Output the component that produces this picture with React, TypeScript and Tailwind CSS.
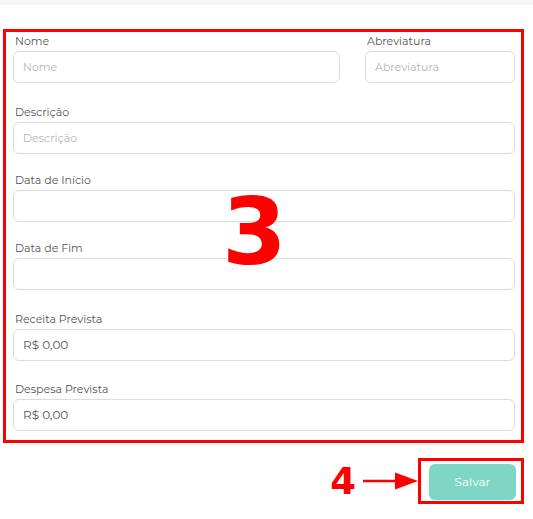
import React from "react";

const font = { fontFamily: '"Montserrat", "Inter", "Liberation Sans", sans-serif' };

function Field({
  label,
  placeholder,
  value,
  className,
}: {
  label: string;
  placeholder?: string;
  value?: string;
  className?: string;
}) {
  return (
    <div className={className}>
      <div className="h-[14px] pl-[2px] text-[11px] leading-[14px] text-[#555]">{label}</div>
      <div className="mt-[3px] flex h-[32px] items-center rounded-[6px] border border-[#dcdcdc] bg-white px-[9px]">
        {value ? (
          <span className="text-[12px] text-[#555]">{value}</span>
        ) : (
          <span className="text-[11px] text-[#b5b5b5]">{placeholder}</span>
        )}
      </div>
    </div>
  );
}

export default function App() {
  return (
    <div className="h-[519px] w-[533px] bg-white" style={font}>
      <div className="h-[5px] bg-[#f6f6f6]" />
      <div className="relative ml-[3px] mt-[24px] w-[521px] border-[3px] border-[#ff0000] pb-[9px] pl-[7px] pr-[6px] pt-[2px]">
        <div className="flex gap-[25px]">
          <Field label="Nome" placeholder="Nome" className="w-[327px]" />
          <Field label="Abreviatura" placeholder="Abreviatura" className="flex-1" />
        </div>
        <Field label="Descrição" placeholder="Descrição" className="mt-[22px]" />
        <Field label="Data de Início" className="mt-[19px]" />
        <Field label="Data de Fim" className="mt-[19px]" />
        <Field label="Receita Prevista" value="R$ 0,00" className="mt-[22px]" />
        <Field label="Despesa Prevista" value="R$ 0,00" className="mt-[21px]" />
        <div
          className="pointer-events-none absolute left-[216px] top-[154px] text-[93px] font-bold leading-none text-[#ff0000]"
          style={{ fontFamily: '"DejaVu Sans", sans-serif' }}
        >
          3
        </div>
      </div>
      <div className="mt-[15px] flex items-center justify-end pr-[9px]">
        <span
          className="text-[37px] font-bold leading-none text-[#ff0000]"
          style={{ fontFamily: '"DejaVu Sans", sans-serif' }}
        >
          4
        </span>
        <svg width="55" height="20" viewBox="0 0 55 20" className="ml-[7px]">
          <line x1="0" y1="10" x2="36" y2="10" stroke="#ff0000" strokeWidth="2.5" />
          <polygon points="32,1.5 55,10 32,18.5" fill="#ff0000" />
        </svg>
        <div className="h-[46px] w-[106px] border-[3px] border-[#ff0000] pl-[8px] pt-[3px]">
          <div className="flex h-[36px] w-[87px] items-center justify-center rounded-[6px] bg-[#7ed6c5] text-[12px] text-white">
            Salvar
          </div>
        </div>
      </div>
    </div>
  );
}
